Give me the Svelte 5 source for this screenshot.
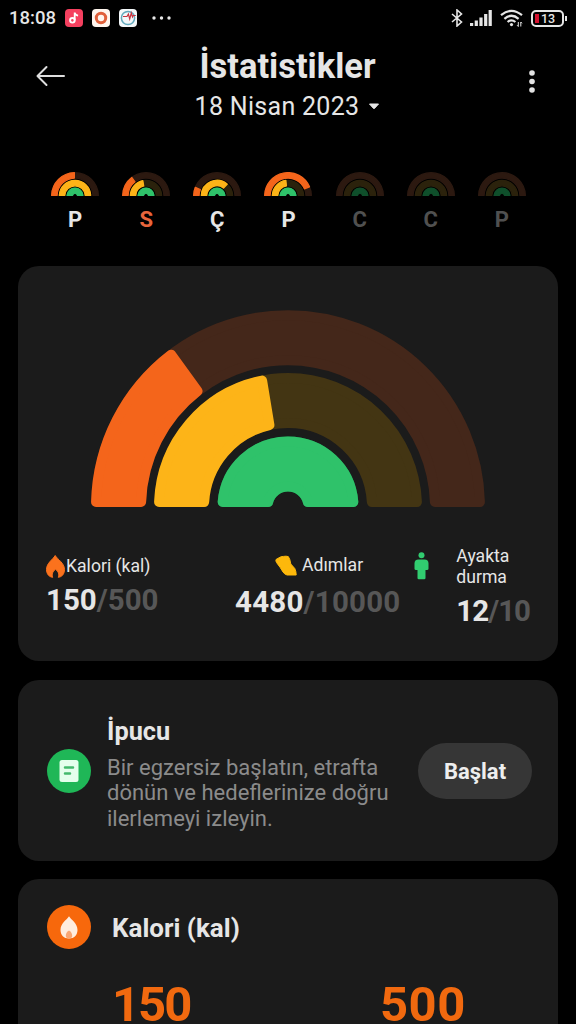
<script>
  const rings = [
    { key: 'cal', outer: 197, inner: 142, color: '#f4651b', track: '#44271a' },
    { key: 'steps', outer: 134, inner: 79, color: '#fdb418', track: '#433513' },
    { key: 'stand', outer: 70.5, inner: 15.5, color: '#2fc26a', track: '#187a42' }
  ];

  const today = { cal: 0.3, steps: 0.448, stand: 1 };

  const days = [
    { label: 'P', cal: 0.5, steps: 1, stand: 1 },
    { label: 'S', ...today, current: true },
    { label: 'Ç', cal: 0.13, steps: 0.74, stand: 1 },
    { label: 'P', cal: 0.88, steps: 0.47, stand: 1 },
    { label: 'C', future: true },
    { label: 'C', future: true },
    { label: 'P', future: true }
  ];

  // half ring sector, shrunk by k so the round stroke gives soft corners
  function sector(outer, inner, value, k = 5) {
    const ro = outer - k;
    const ri = inner + k;
    const end = Math.PI * value;
    const point = (r, a) => `${(197 - r * Math.cos(a)).toFixed(2)} ${(197 - r * Math.sin(a)).toFixed(2)}`;
    const o = Math.asin(k / ro);
    const i = Math.asin(k / ri);
    return `M${point(ro, o)}A${ro} ${ro} 0 0 1 ${point(ro, end - o)}L${point(ri, end - i)}A${ri} ${ri} 0 0 0 ${point(ri, i)}Z`;
  }
</script>

{#snippet gauge(values)}
  <svg class="gauge" viewBox="0 0 394 197">
    {#each rings as ring}
      <path class="track" d={sector(ring.outer, ring.inner, 1)} fill={ring.track} stroke={ring.track} />
      {#if values[ring.key]}
        <path d={sector(ring.outer, ring.inner, values[ring.key])} fill={ring.color} stroke={ring.color} />
      {/if}
    {/each}
  </svg>
{/snippet}

<div class="screen">
  <div class="status">
    <span class="time">18:08</span>
    <svg class="app" viewBox="0 0 18 18">
      <rect width="18" height="18" rx="4" fill="#f5405f" />
      <circle cx="7.4" cy="11.3" r="2.3" fill="none" stroke="#fff" stroke-width="1.9" />
      <path d="M9.7 11.3V3.6c.4 1.9 1.5 2.8 3.4 3" fill="none" stroke="#fff" stroke-width="1.8" />
    </svg>
    <svg class="app" viewBox="0 0 18 18">
      <rect width="18" height="18" rx="4" fill="#fff6ee" />
      <circle cx="9" cy="9" r="4.7" fill="none" stroke="#e0603a" stroke-width="3" />
    </svg>
    <svg class="app" viewBox="0 0 18 18">
      <rect width="18" height="18" rx="4" fill="#f4f8fa" />
      <circle cx="9" cy="9" r="6.6" fill="none" stroke="#61a9bd" stroke-width="1.5" />
      <path d="M4 7.5h4l1.4-2.5 1.3 5 1.6-6 1.2 4 .8-1.5h2.5" fill="none" stroke="#c63440" stroke-width="1.2" />
    </svg>
    <svg class="dots" viewBox="0 0 20 4" fill="#e8e8e8">
      <circle cx="2" cy="2" r="1.7" /><circle cx="9.5" cy="2" r="1.7" /><circle cx="17" cy="2" r="1.7" />
    </svg>
    <svg class="bluetooth" viewBox="0 0 12 18" fill="none" stroke="#e6e6e6" stroke-width="1.6">
      <path d="M1 5l9.5 8L6 17V1l4.5 4L1 13" />
    </svg>
    <svg class="signal" viewBox="0 0 22 16" fill="#e6e6e6">
      <rect y="13" width="3.2" height="3" /><rect x="4.7" y="10.5" width="3.2" height="5.5" />
      <rect x="9.4" y="7.5" width="3.2" height="8.5" /><rect x="14.1" y="4" width="3.2" height="12" />
      <rect x="18.6" width="3.2" height="16" />
    </svg>
    <svg class="wifi" viewBox="0 0 23 18" fill="none" stroke="#e6e6e6" stroke-width="2.2">
      <path d="M1 6.2Q11.5-2.6 22 6.2M4.4 9.8Q11.5 3.7 18.6 9.8M7.6 13Q11.5 9.6 15.4 13" />
      <circle cx="11.5" cy="15.6" r="1.6" fill="#e6e6e6" stroke="none" />
      <path d="M18.3 13v4.500l-1.200-1.300M20.800 17.500v-4.500l1.200 1.300" stroke-width="1" />
    </svg>
    <div class="battery"><i></i>13</div>
  </div>

  <header>
    <svg class="back" viewBox="0 0 30 22" fill="none" stroke="#dedede" stroke-width="2" stroke-linecap="round" stroke-linejoin="round">
      <path d="M10.5 2L1.5 11L10.5 20M2 11H28" />
    </svg>
    <div class="heading">
      <h1>İstatistikler</h1>
      <p>18 Nisan 2023 <svg viewBox="0 0 12 7"><path d="M1.5 1h9L6.5 5.4q-.5 .5-1 0z" fill="#e6e6e6" stroke="#e6e6e6" stroke-linejoin="round" /></svg></p>
    </div>
    <svg class="more" viewBox="0 0 6 24" fill="#e2e2e2">
      <circle cx="3" cy="3" r="2.8" /><circle cx="3" cy="11.5" r="2.8" /><circle cx="3" cy="20" r="2.8" />
    </svg>
  </header>

  <nav>
    {#each days as day}
      <div class="day" class:current={day.current} class:future={day.future}>
        {@render gauge(day)}
        <span>{day.label}</span>
      </div>
    {/each}
  </nav>

  <section class="card summary">
    {@render gauge(today)}
    <div class="stats">
      <div class="stat calories">
        <div class="label">
          <svg width="19" height="23" viewBox="0 0 19 23"><path d="M9.2 .5C11.5 4.5 18.5 8 18.5 14.5C18.5 18.8 16 22 12.3 22.3C13.5 19.5 12.5 16.5 9.5 14.3C6.5 16.5 5.5 19.5 6.7 22.3C3 22 .5 18.8 .5 14.5C.5 8 7 4.5 9.2 .5Z" fill="#fb721d" stroke="#fb721d" stroke-linejoin="round" /></svg>
          Kalori (kal)
        </div>
        <div class="value">150<span>/500</span></div>
      </div>
      <div class="stat steps">
        <div class="label">
          <svg width="22" height="21" viewBox="0 0 22 21"><path d="M1 4.5L4 2.8L6 1.8L8.5 1.4L11 1.2L13.3 1.6L14.8 4.5L15.8 9L19.8 13.5Q21.2 16.5 21.2 20H12Q9.5 19.3 8 17L5.2 12.5L1.5 7.5Q.5 5.8 1 4.5Z" fill="#fdb80b" stroke="#fdb80b" stroke-linejoin="round" /></svg>
          Adımlar
        </div>
        <div class="value">4480<span>/10000</span></div>
      </div>
      <div class="stat stand">
        <svg width="15" height="28" viewBox="0 0 15 28" fill="#31cd70"><circle cx="7.5" cy="3.3" r="3" /><path d="M4.5 7.5h6q4 0 4 4v5.2q0 1.300-1.500 1.300h-1.500V26q0 1.300-1.300 1.300H4.800Q3.500 27.300 3.500 26v-8H2Q.5 18 .5 16.700v-5.200q0-4 4-4Z" /></svg>
        <div>
          <div class="label">Ayakta<br />durma</div>
          <div class="value">12<span>/10</span></div>
        </div>
      </div>
    </div>
  </section>

  <section class="card tip">
    <svg class="badge" viewBox="0 0 44 44">
      <circle cx="22" cy="22" r="22" fill="#1fb757" />
      <rect x="12.5" y="11" width="19" height="22" rx="2.5" fill="#e4ffec" />
      <path d="M18 18.5h8M18 24.5h5" stroke="#43b96c" stroke-width="2.5" stroke-linecap="round" />
    </svg>
    <div class="text">
      <h2>İpucu</h2>
      <p>Bir egzersiz başlatın, etrafta<br />dönün ve hedeflerinize doğru<br />ilerlemeyi izleyin.</p>
    </div>
    <button>Başlat</button>
  </section>

  <section class="card detail">
    <div class="title">
      <svg class="badge" viewBox="0 0 44 44">
        <circle cx="22" cy="22" r="22" fill="#f7680c" />
        <path d="M22 11.3C24 15 30.5 18 30.5 25C30.5 30 27 33.500 22 33.500S13.500 30 13.500 25C13.500 18 20 15 22 11.300Z" fill="#ffeddf" />
        <path d="M22 25.500q3.200 2 3.200 5.200q0 2.800-3.200 2.800t-3.200-2.800q0-3.200 3.200-5.200Z" fill="#f9a673" />
      </svg>
      <h2>Kalori (kal)</h2>
    </div>
    <div class="totals">
      <strong class="done">150</strong>
      <strong>500</strong>
    </div>
  </section>
</div>

<style>
  :global(body) {
    background: #000;
    overflow: hidden;
  }

  .screen {
    width: 576px;
    height: 1024px;
    overflow: hidden;
    background: #000;
    color: #e6e6e6;
    font-family: Roboto, "Noto Sans", sans-serif;
  }

  h1, h2, p {
    margin: 0;
  }

  svg {
    display: block;
    flex: none;
  }

  .status {
    display: flex;
    align-items: center;
    height: 36px;
    padding: 0 9px;
  }

  .time {
    width: 56px;
    font-size: 18.5px;
    font-weight: 500;
  }

  .app {
    width: 18px;
    height: 18px;
    margin-right: 9px;
  }

  .dots {
    width: 20px;
    margin: 0 auto 0 6px;
  }

  .bluetooth {
    width: 12px;
    margin-right: 7px;
  }

  .signal {
    width: 22px;
    margin-right: 8px;
  }

  .wifi {
    width: 23px;
    margin-right: 8px;
  }

  .battery {
    position: relative;
    box-sizing: border-box;
    width: 33px;
    height: 17px;
    margin-right: 3px;
    padding-left: 8px;
    border: 2px solid #e6e6e6;
    border-radius: 5px;
    font-size: 12.5px;
    font-weight: 500;
    line-height: 13px;
  }

  .battery i {
    position: absolute;
    left: 2px;
    top: 2px;
    width: 4px;
    height: 9px;
    background: #d3122f;
  }

  .battery::after {
    content: '';
    position: absolute;
    right: -5px;
    top: 4px;
    width: 2px;
    height: 5px;
    background: #e6e6e6;
  }

  header {
    display: flex;
    justify-content: space-between;
    height: 136px;
    padding: 0 41px 0 36px;
  }

  .back {
    width: 30px;
    height: 22px;
    margin-top: 29px;
  }

  .heading {
    padding-top: 10px;
    margin-right: 20px;
    text-align: center;
  }

  h1 {
    font-size: 34.5px;
    line-height: 40px;
  }

  .heading p {
    display: flex;
    align-items: center;
    gap: 9px;
    font-size: 25px;
    line-height: 41px;
    letter-spacing: 0.3px;
  }

  .heading p svg {
    width: 12px;
  }

  .more {
    width: 6px;
    height: 24px;
    margin-top: 34px;
  }

  nav {
    display: flex;
    justify-content: space-between;
    height: 94px;
    padding: 0 50px 0 51px;
  }

  .day {
    width: 48px;
    text-align: center;
    font-size: 22px;
    font-weight: 700;
    line-height: 48px;
  }

  .day .gauge {
    width: 48px;
  }

  .day .track {
    opacity: 0.65;
  }

  .current span {
    color: #e8653c;
  }

  .future span {
    color: #505050;
  }

  .gauge path {
    stroke-width: 10;
    stroke-linejoin: round;
  }

  .card {
    box-sizing: border-box;
    margin: 0 18px;
    border-radius: 21px;
    background: #1b1b1b;
  }

  .summary {
    height: 395px;
    padding: 44px 28px 0;
  }

  .summary .gauge {
    width: 394px;
    margin: 0 auto;
  }

  .stats {
    display: flex;
    margin-top: 39px;
  }

  .label {
    display: flex;
    align-items: center;
    font-size: 17.6px;
    line-height: 21px;
    white-space: nowrap;
  }

  .value {
    font-size: 29.5px;
    font-weight: 700;
    line-height: 34px;
  }

  .value span {
    color: #575757;
  }

  .calories {
    width: 191px;
    padding-top: 9px;
  }

  .calories .label {
    gap: 1px;
  }

  .calories .value {
    padding-top: 5px;
  }

  .steps {
    width: 177px;
    padding-top: 9px;
  }

  .steps .label {
    padding-left: 40px;
    gap: 5px;
  }

  .steps .value {
    padding-top: 9px;
    letter-spacing: 0.2px;
  }

  .stand {
    display: flex;
    gap: 27px;
    margin-left: 4px;
  }

  .stand > svg {
    margin-top: 6px;
  }

  .stand .label {
    display: block;
  }

  .stand .value {
    padding-top: 6px;
    letter-spacing: -1px;
  }

  .tip {
    display: flex;
    align-items: center;
    height: 181px;
    margin-top: 19px;
    padding: 0 26px 0 29px;
  }

  .badge {
    width: 44px;
    height: 44px;
  }

  .text {
    flex: 1;
    margin-left: 16px;
    padding-top: 4px;
    white-space: nowrap;
  }

  h2 {
    font-size: 25.3px;
    line-height: 36px;
  }

  .text h2 {
    margin-bottom: 5px;
  }

  .text p {
    color: #8b8b8b;
    font-size: 22px;
    line-height: 25.5px;
  }

  button {
    width: 114px;
    height: 56px;
    padding-top: 3px;
    border: 0;
    border-radius: 28px;
    background: #363636;
    color: #eee;
    font: 700 22px Roboto, sans-serif;
  }

  .detail {
    height: 300px;
    margin-top: 18px;
    padding: 26px 29px 0;
  }

  .title {
    display: flex;
    align-items: center;
    gap: 21px;
  }

  .title h2 {
    padding-top: 1px;
    font-size: 26px;
  }

  .totals {
    display: flex;
    padding: 37px 0 0 65px;
    color: #f1690f;
    font-size: 49px;
    line-height: 38px;
  }

  .totals strong {
    flex: none;
    letter-spacing: 0.5px;
  }

  .totals .done {
    width: 268px;
    letter-spacing: -2px;
  }
</style>
